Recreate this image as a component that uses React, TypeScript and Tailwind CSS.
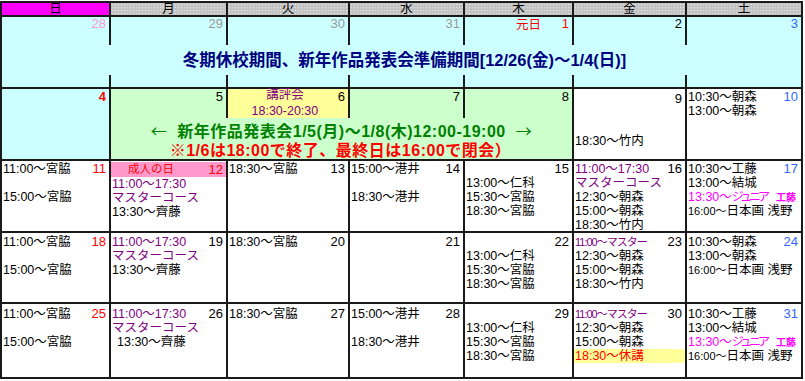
import type { ReactNode } from 'react';

type Line = null | string | { t: ReactNode; c?: string };

const COLS = 'grid grid-cols-[109px_117px_122px_115px_109px_113px_116px]';
const LINE = 'border-[#1a1a1a]';

const purple = 'text-[#800080]';
const junior: Line = {
  t: (
    <>
      13:30～<span className="text-[12px] tracking-[-3px]">ジュニア</span>
      <span className="ml-[9px] text-[10px] font-bold">工藤</span>
    </>
  ),
  c: 'text-[#ff00ff] text-[12.5px]',
};
const nihonga: Line = {
  t: (
    <>
      <span className="text-[11px]">16:00～</span>日本画 浅野
    </>
  ),
};
const master: Line = { t: '11:00～17:30', c: purple };
const masterCourse: Line = { t: 'マスターコース', c: purple };
const masterShort: Line = { t: '11:00～マスター', c: `${purple} text-[11px] tracking-[-1px]` };

function Row({ line }: { line: Line }) {
  if (line === null) return <div className="h-[14px]" />;
  const t = typeof line === 'string' ? line : line.t;
  const c = typeof line === 'string' ? '' : line.c ?? '';
  return <div className={`h-[14px] leading-[14px] pl-[1px] whitespace-nowrap ${c}`}>{t}</div>;
}

interface DayProps {
  d: string;
  dc?: string;
  lines: Line[];
  bg?: string;
  pt?: string;
  className?: string;
}

function Day({ d, dc = 'text-black', lines, bg = 'bg-white', pt = 'pt-[2px]', className = '' }: DayProps) {
  const [first, ...rest] = lines;
  return (
    <div className={`${bg} border-r-2 ${LINE} ${pt} overflow-hidden text-[12.5px] ${className}`}>
      <div className="flex justify-between h-[14px]">
        <div className="flex-1 min-w-0">
          <Row line={first ?? null} />
        </div>
        <span className={`pr-[3px] text-[13px] leading-[14px] ${dc}`}>{d}</span>
      </div>
      {rest.map((l, i) => (
        <Row key={i} line={l} />
      ))}
    </div>
  );
}

function Week1() {
  const tops: { d: string; c: string; pre?: ReactNode }[] = [
    { d: '28', c: 'text-[#ff99cc]' },
    { d: '29', c: 'text-[#999999]' },
    { d: '30', c: 'text-[#999999]' },
    { d: '31', c: 'text-[#999999]' },
    { d: '1', c: 'text-[#ff0000]', pre: <span className="pl-[51px] text-[12.5px] text-[#ff0000]">元日</span> },
    { d: '2', c: 'text-black' },
    { d: '3', c: 'text-[#3366ff]' },
  ];
  return (
    <div className={`${COLS} grid-rows-[28px_30px_12px] bg-[#ccffff] border-b-2 ${LINE}`}>
      {tops.map((x) => (
        <div key={x.d} className={`border-r-2 ${LINE} flex justify-between leading-[14px]`}>
          <div>{x.pre}</div>
          <span className={`pr-[3px] text-[13px] ${x.c}`}>{x.d}</span>
        </div>
      ))}
      <div className={`col-span-7 border-r-2 ${LINE} flex items-center justify-center pl-[6px] text-[16.5px] font-bold text-[#000080]`}>
        冬期休校期間、新年作品発表会準備期間[12/26(金)～1/4(日)]
      </div>
      {tops.map((x) => (
        <div key={x.d} className={`border-r-2 ${LINE}`} />
      ))}
    </div>
  );
}

function Week2() {
  const green = 'bg-[#ccffcc]';
  const arrow = "font-['Noto_Sans_CJK_JP',sans-serif] font-normal";
  return (
    <div className={`${COLS} grid-rows-[29px_41px] border-b-2 ${LINE}`}>
      <Day d="4" dc="text-[#ff0000] font-bold" lines={[null]} bg="bg-[#ccffff]" pt="pt-[1px]" className="col-start-1 row-start-1 row-span-2" />
      <Day d="5" lines={[null]} bg={green} pt="pt-[1px]" className="col-start-2 row-start-1" />
      <div className={`col-start-3 row-start-1 bg-[#ffff99] border-r-2 ${LINE} flex`}>
        <div className={`flex-1 flex flex-col items-center pl-[4px] text-[12.5px] ${purple}`}>
          <div className="leading-[13px]">講評会</div>
          <div className="leading-[18px]">18:30-20:30</div>
        </div>
        <span className="pr-[3px] text-[13px] leading-[14px] pt-[1px]">6</span>
      </div>
      <Day d="7" lines={[null]} bg={green} pt="pt-[1px]" className="col-start-4 row-start-1" />
      <Day d="8" lines={[null]} bg={green} pt="pt-[1px]" className="col-start-5 row-start-1" />
      <div className={`col-start-2 col-span-4 row-start-2 ${green} border-r-2 ${LINE} pt-[3px] text-center font-bold text-[16px] leading-[19px] tracking-[0.5px] whitespace-nowrap`}>
        <div className="text-[#008000]">
          <span className={arrow}>←</span>&nbsp;&nbsp;新年作品発表会1/5(月)～1/8(木)12:00-19:00&nbsp;&nbsp;
          <span className={arrow}>→</span>
        </div>
        <div className="text-[#ff0000] pr-[2px]">※1/6は18:00で終了、最終日は16:00で閉会）</div>
      </div>
      <Day d="9" lines={[null, null, null, '18:30～竹内']} pt="pt-[3px]" className="col-start-6 row-start-1 row-span-2" />
      <Day d="10" dc="text-[#3366ff]" lines={['10:30～朝森', '13:00～朝森']} pt="pt-[1px]" className="col-start-7 row-start-1 row-span-2" />
    </div>
  );
}

function Week3() {
  const pt = 'pt-[1px]';
  return (
    <div className={`${COLS} h-[72px] border-b-2 ${LINE}`}>
      <Day d="11" dc="text-[#ff0000]" pt={pt} lines={['11:00～宮脇', null, '15:00～宮脇']} />
      <div className={`bg-white border-r-2 ${LINE} pt-[1px] text-[12.5px] overflow-hidden`}>
        <div className="flex justify-between h-[15px] bg-[#ff99cc] text-[#ff0000] leading-[15px]">
          <span className="pl-[17px] text-[11.5px]">成人の日</span>
          <span className="pr-[3px] text-[13px]">12</span>
        </div>
        <Row line={master} />
        <Row line={masterCourse} />
        <Row line="13:30～齊藤" />
      </div>
      <Day d="13" pt={pt} lines={['18:30～宮脇']} />
      <Day d="14" pt={pt} lines={['15:00～港井', null, '18:30～港井']} />
      <Day d="15" pt={pt} lines={[null, '13:00～仁科', '15:30～宮脇', '18:30～宮脇']} />
      <Day d="16" pt={pt} lines={[master, masterCourse, '12:30～朝森', '15:00～朝森', '18:30～竹内']} />
      <Day d="17" dc="text-[#3366ff]" pt={pt} lines={['10:30～工藤', '13:00～結城', junior, nihonga]} />
    </div>
  );
}

function Week4() {
  return (
    <div className={`${COLS} h-[71px] border-b-2 ${LINE}`}>
      <Day d="18" dc="text-[#ff0000]" lines={['11:00～宮脇', null, '15:00～宮脇']} />
      <Day d="19" lines={[master, masterCourse, '13:30～齊藤']} />
      <Day d="20" lines={['18:30～宮脇']} />
      <Day d="21" lines={[null]} />
      <Day d="22" lines={[null, '13:00～仁科', '15:30～宮脇', '18:30～宮脇']} />
      <Day d="23" lines={[masterShort, '12:30～朝森', '15:00～朝森', '18:30～竹内']} />
      <Day d="24" dc="text-[#3366ff]" lines={['10:30～朝森', '13:00～朝森', nihonga]} />
    </div>
  );
}

function Week5() {
  const pt = 'pt-[3px]';
  return (
    <div className={`${COLS} h-[75px] border-b-2 ${LINE}`}>
      <Day d="25" dc="text-[#ff0000]" pt={pt} lines={['11:00～宮脇', null, '15:00～宮脇']} />
      <Day d="26" pt={pt} lines={[master, masterCourse, { t: '13:30～齊藤', c: 'pl-[6px]' }]} />
      <Day d="27" pt={pt} lines={['18:30～宮脇']} />
      <Day d="28" pt={pt} lines={['15:00～港井', null, '18:30～港井']} />
      <Day d="29" pt={pt} lines={[null, '13:00～仁科', '15:30～宮脇', '18:30～宮脇']} />
      <Day
        d="30"
        pt={pt}
        lines={[masterShort, '12:30～朝森', '15:00～朝森', { t: '18:30～休講', c: 'bg-[#ffff99] text-[#ff0000]' }]}
      />
      <Day d="31" dc="text-[#3366ff]" pt={pt} lines={['10:30～工藤', '13:00～結城', junior, nihonga]} />
    </div>
  );
}

export default function App() {
  const heads = ['日', '月', '火', '水', '木', '金', '土'];
  return (
    <div className="w-[805px] h-[381px] bg-white font-['Liberation_Sans','Noto_Sans_CJK_JP',sans-serif] text-black">
      <div className={`w-[803px] mt-[1px] border-l-2 border-t-2 ${LINE}`}>
        <div className={`${COLS} h-[14px]`}>
          {heads.map((h, i) => (
            <div
              key={h}
              className={`border-r-2 border-b-2 ${LINE} text-center text-[12.5px] leading-[12px] ${
                i === 0
                  ? 'bg-[#ff00ff]'
                  : 'bg-[#c4c4c4] bg-[radial-gradient(#e4e4e4_0.7px,transparent_0.8px)] bg-[length:3px_3px]'
              }`}
            >
              {h}
            </div>
          ))}
        </div>
        <Week1 />
        <Week2 />
        <Week3 />
        <Week4 />
        <Week5 />
      </div>
    </div>
  );
}
